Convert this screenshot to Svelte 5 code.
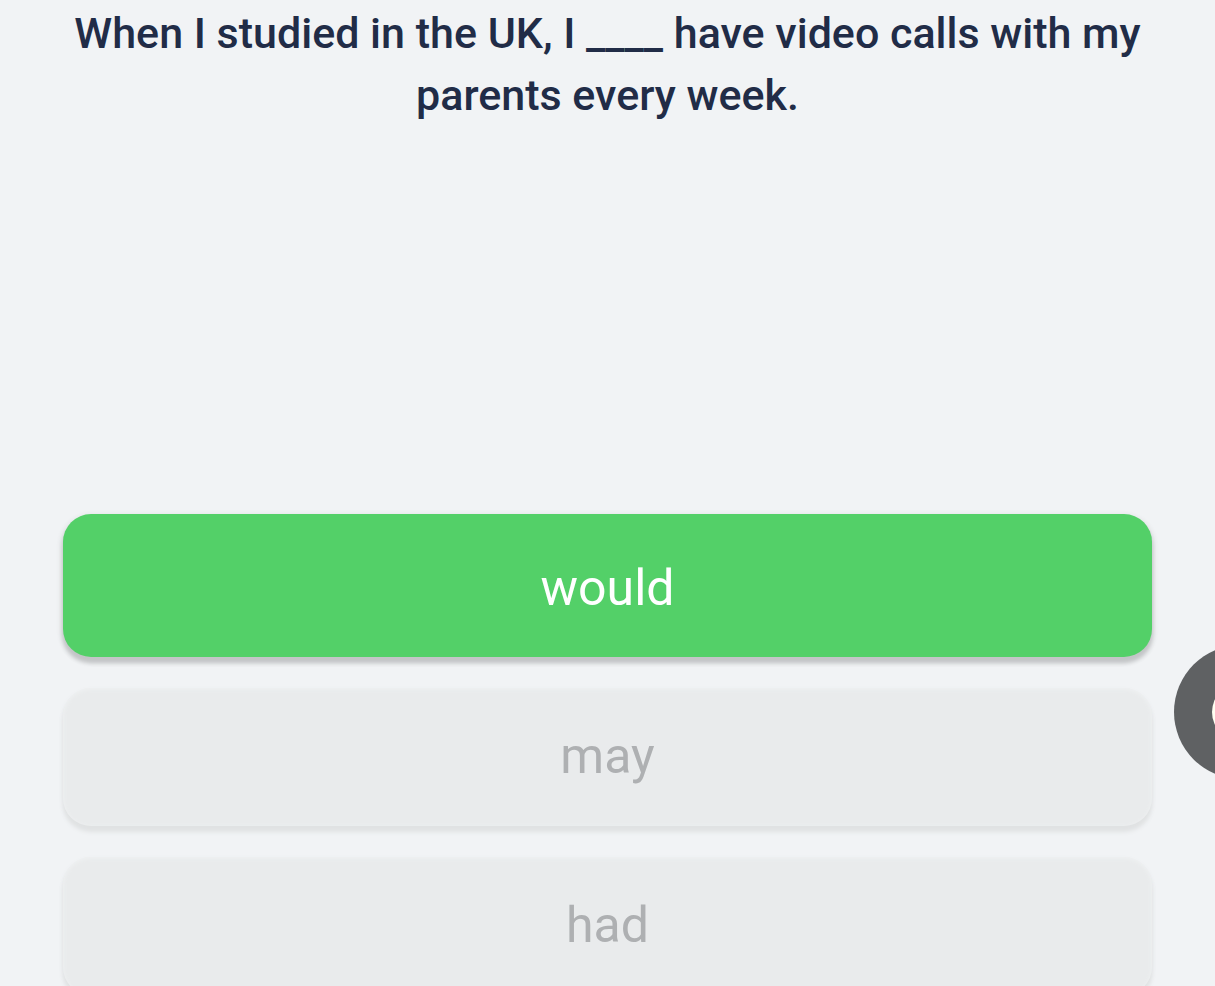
<script>
  const question = 'When I studied in the UK, I ____ have video calls with my parents every week.';
  const answers = ['would', 'may', 'had'];
  const correct = 'would';
</script>

<main class="quiz">
  <h1 class="question">{question}</h1>
  <div class="answers">
    {#each answers as answer}
      <button class="answer" class:correct={answer === correct} type="button">{answer}</button>
    {/each}
  </div>
  <button class="bubble" type="button" aria-label="Open assistant">
    <svg viewBox="0 0 134 134" aria-hidden="true">
      <circle cx="67" cy="67" r="67" fill="#5f6163" />
      <circle cx="67" cy="67" r="29" fill="#fffff2" />
    </svg>
  </button>
</main>

<style>
  :global(body) {
    margin: 0;
    background: #f1f3f5;
  }
  .quiz {
    position: relative;
    box-sizing: border-box;
    height: 100vh;
    overflow: hidden;
    padding: 2px 63px 0;
    font-family: Roboto, sans-serif;
  }
  .question {
    margin: 0;
    min-height: 512px;
    color: #212c47;
    font-size: 43px;
    font-weight: 500;
    line-height: 62px;
    text-align: center;
  }
  .answers {
    display: flex;
    flex-direction: column;
    gap: 31px;
  }
  .answer {
    flex: none;
    min-height: 138px;
    padding: 0 0 2px;
    border: 0;
    border-radius: 28px;
    background: #e9ebec;
    box-shadow:
      inset 0 1px 4px #f0f2f3,
      0 6px 4px #e0e2e3,
      0 2px 4px #e8eaec;
    color: #aeb0b2;
    font: 400 50px/58px Roboto, sans-serif;
  }
  .correct {
    min-height: 143px;
    padding: 4px 0 0;
    background: #53d068;
    box-shadow:
      0 6px 4px #c3c5c7,
      0 3px 6px #c3c5c7;
    color: #fff;
  }
  .bubble {
    position: absolute;
    top: 645px;
    right: -93px;
    width: 134px;
    height: 134px;
    padding: 0;
    border: 0;
    border-radius: 50%;
    background: none;
  }
  .bubble svg {
    display: block;
  }
</style>
